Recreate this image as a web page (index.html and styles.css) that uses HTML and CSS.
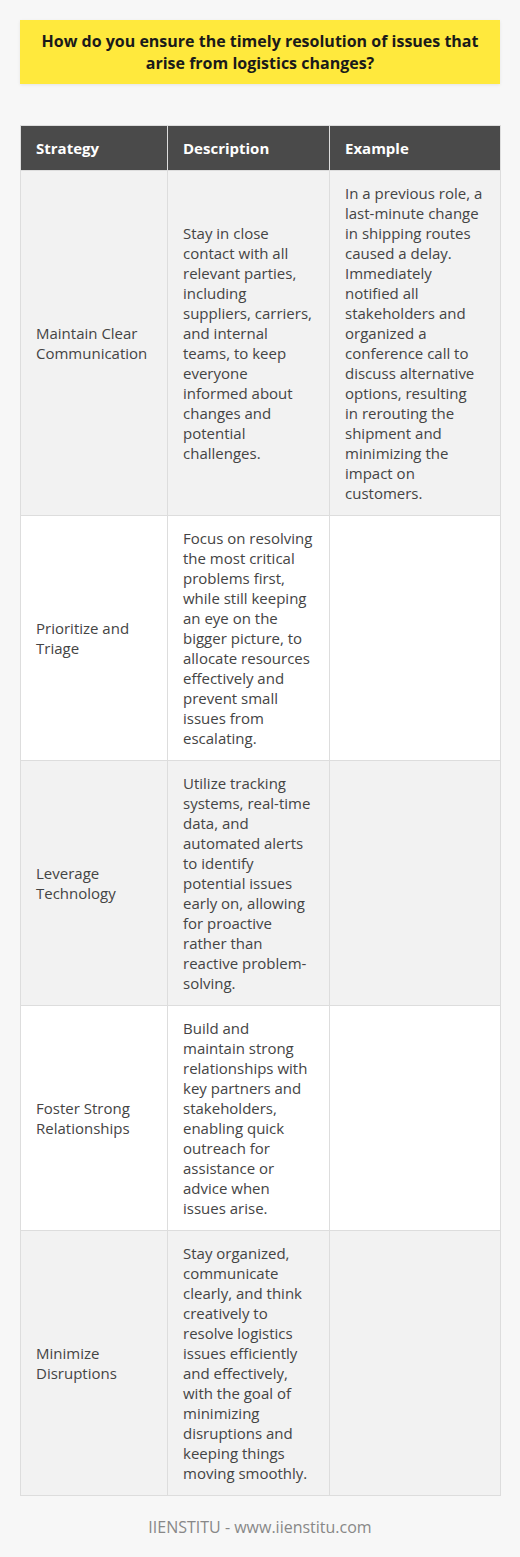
FILE: index.html
```html
<!DOCTYPE html>
<html lang="en">
<head>
<meta charset="utf-8">
<title>Logistics issues</title>
<link rel="stylesheet" href="styles.css">
</head>
<body>
<div class="page">
  <h1 class="title">How do you ensure the timely resolution of issues that arise from logistics changes?</h1>
  <table class="grid">
    <colgroup>
      <col class="c1"><col class="c2"><col class="c3">
    </colgroup>
    <thead>
      <tr><th>Strategy</th><th>Description</th><th>Example</th></tr>
    </thead>
    <tbody>
      <tr>
        <td>Maintain Clear Communication</td>
        <td>Stay in close contact with all relevant parties, including suppliers, carriers, and internal teams, to keep everyone informed about changes and potential challenges.</td>
        <td class="ex">In a previous role, a last-minute change in shipping routes caused a delay. Immediately notified all stakeholders and organized a conference call to discuss alternative options, resulting in rerouting the shipment and minimizing the impact on customers.</td>
      </tr>
      <tr>
        <td>Prioritize and Triage</td>
        <td>Focus on resolving the most critical problems first, while still keeping an eye on the bigger picture, to allocate resources effectively and prevent small issues from escalating.</td>
        <td class="ex"></td>
      </tr>
      <tr>
        <td>Leverage Technology</td>
        <td>Utilize tracking systems, real-time data, and automated alerts to identify potential issues early on, allowing for proactive rather than reactive problem-solving.</td>
        <td class="ex"></td>
      </tr>
      <tr>
        <td>Foster Strong Relationships</td>
        <td>Build and maintain strong relationships with key partners and stakeholders, enabling quick outreach for assistance or advice when issues arise.</td>
        <td class="ex"></td>
      </tr>
      <tr>
        <td>Minimize Disruptions</td>
        <td>Stay organized, communicate clearly, and think creatively to resolve logistics issues efficiently and effectively, with the goal of minimizing disruptions and keeping things moving smoothly.</td>
        <td class="ex"></td>
      </tr>
    </tbody>
  </table>
  <p class="footer">IIENSTITU - www.iienstitu.com</p>
</div>
</body>
</html>
```

FILE: styles.css
```css
html, body {
  margin: 0;
  padding: 0;
  background: #f7f7f7;
}
body {
  font-family: "Open Sans", "Liberation Sans", sans-serif;
  color: #444;
}
.page {
  padding: 20px;
}
.title {
  margin: 0;
  padding: 10px 20px;
  background: #ffe93d;
  color: #1a1a1a;
  font-size: 16px;
  font-weight: 700;
  line-height: 22px;
  text-align: center;
  box-shadow: 0 1px 3px rgba(0,0,0,0.08);
}
.grid {
  margin-top: 41px;
  width: 480px;
  border-collapse: collapse;
  table-layout: fixed;
  font-size: 15px;
  line-height: 20px;
}
.c1 { width: 147px; }
.c2 { width: 162px; }
.c3 { width: 171px; }
.grid th {
  background: #4a4a4a;
  color: #fff;
  font-weight: 700;
  font-size: 15px;
  text-align: left;
  padding: 12px 15px;
  border: 1px solid #ddd;
}
.grid td {
  padding: 12px 15px;
  border: 1px solid #ddd;
  vertical-align: middle;
  text-align: left;
}
.grid td.ex {
  padding-right: 16.5px;
}
.grid tbody tr:nth-child(odd) td { background: #f2f2f2; }
.grid tbody tr:nth-child(even) td { background: #fff; }
.footer {
  margin: 20px 0 0;
  text-align: center;
  font-size: 16px;
  line-height: 22px;
  color: #888;
}
```
